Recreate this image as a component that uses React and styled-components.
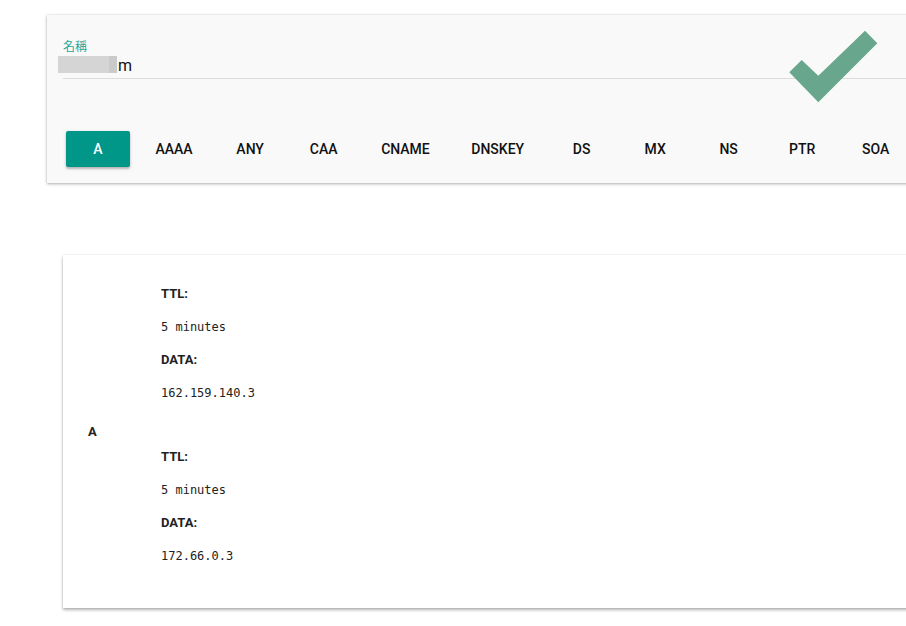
import React from "react";
import styled, { createGlobalStyle } from "styled-components";

const Global = createGlobalStyle`
  html, body { margin: 0; padding: 0; background: #fff; }
  body { overflow: hidden; font-family: Roboto, "Noto Sans", sans-serif; }
`;

const Page = styled.div`
  width: 906px;
  height: 626px;
  overflow: hidden;
  padding: 15px 0 0 47px;
  box-sizing: border-box;
`;

const SearchCard = styled.section`
  position: relative;
  width: 880px;
  background: #f9f9f9;
  box-shadow: 0 1px 3px rgba(0, 0, 0, 0.3), 0 0 2px rgba(0, 0, 0, 0.08);
  padding: 23px 0 16px 0;
  box-sizing: border-box;
`;

const Field = styled.div`
  margin-left: 16px;
  display: flex;
  flex-direction: column;
`;

const Label = styled.label`
  font-family: "Noto Sans CJK TC", "Noto Sans CJK SC", sans-serif;
  font-size: 12px;
  line-height: 16px;
  color: #26a69a;
`;

const ValueRow = styled.div`
  display: flex;
  align-items: flex-start;
  height: 25px;
  border-bottom: 1px solid #dcdcdc;
  box-sizing: border-box;
`;

const Redacted = styled.span`
  display: inline-block;
  margin: 2px 1px 0 -5px;
  width: 59px;
  height: 17px;
  background: linear-gradient(to right, #d5d5d5 0, #d5d5d5 51px, #cacaca 51px);
`;

const ValueText = styled.span`
  font-family: Roboto, sans-serif;
  font-size: 16px;
  line-height: 24px;
  color: #111;
`;

const Check = styled.svg`
  position: absolute;
  left: 741px;
  top: 14px;
`;

const TypeBar = styled.div`
  display: flex;
  gap: 9.5px;
  margin-top: 52px;
  padding-left: 19px;
`;

const TypeButton = styled.button`
  height: 36px;
  min-width: 64px;
  padding: 0 16px;
  border: none;
  border-radius: 2px;
  font-family: Roboto, sans-serif;
  font-weight: 500;
  font-size: 14px;
  text-transform: uppercase;
  cursor: pointer;
  background: ${(p) => (p.$active ? "#009688" : "transparent")};
  color: ${(p) => (p.$active ? "#fff" : "#111")};
  box-shadow: ${(p) =>
    p.$active ? "0 2px 2px rgba(0,0,0,0.2), 0 1px 4px rgba(0,0,0,0.12)" : "none"};
`;

const ResultCard = styled.section`
  width: 860px;
  margin: 72px 0 0 16px;
  background: #fff;
  box-shadow: 0 2px 3px rgba(0, 0, 0, 0.3), 0 0 2px rgba(0, 0, 0, 0.1);
  padding: 21.5px 25px 36px;
  box-sizing: border-box;
`;

const Record = styled.div``;

const RecordType = styled.div`
  font-family: Roboto, sans-serif;
  font-weight: 700;
  font-size: 13px;
  line-height: 16px;
  color: #222;
  margin-top: 15.5px;
`;

const Details = styled.div`
  margin-left: 73px;
`;

const Key = styled.div`
  font-family: Roboto, sans-serif;
  font-weight: 700;
  font-size: 13px;
  line-height: 33px;
  color: #222;
`;

const Val = styled.div`
  font-family: "DejaVu Sans Mono", "Liberation Mono", monospace;
  font-size: 12px;
  line-height: 33px;
  padding-top: 1px;
  margin-bottom: -1px;
  color: #222;
`;

const types = ["A", "AAAA", "ANY", "CAA", "CNAME", "DNSKEY", "DS", "MX", "NS", "PTR", "SOA"];

const records = [
  { type: null, ttl: "5 minutes", data: "162.159.140.3" },
  { type: "A", ttl: "5 minutes", data: "172.66.0.3" },
];

export default function App() {
  return (
    <Page>
      <Global />
      <SearchCard>
        <Field>
          <Label>名稱</Label>
          <ValueRow>
            <Redacted />
            <ValueText>m</ValueText>
          </ValueRow>
        </Field>
        <Check width="91" height="76" viewBox="0 0 91 76">
          <polygon
            points="1.3,43.3 13.7,31 30.3,46.7 77,1.7 89.3,14.3 30.3,73.3"
            fill="#68a78e"
          />
        </Check>
        <TypeBar>
          {types.map((t) => (
            <TypeButton key={t} $active={t === "A"}>
              {t}
            </TypeButton>
          ))}
        </TypeBar>
      </SearchCard>
      <ResultCard>
        {records.map((r, i) => (
          <Record key={i}>
            {r.type && <RecordType>{r.type}</RecordType>}
            <Details>
              <Key>TTL:</Key>
              <Val>{r.ttl}</Val>
              <Key>DATA:</Key>
              <Val>{r.data}</Val>
            </Details>
          </Record>
        ))}
      </ResultCard>
    </Page>
  );
}
